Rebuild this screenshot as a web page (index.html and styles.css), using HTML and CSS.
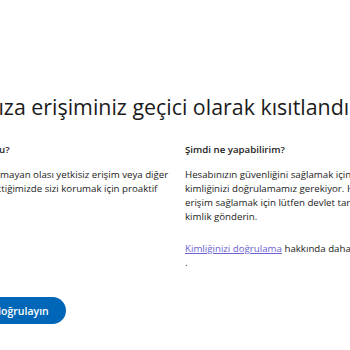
FILE: index.html
```html
<!DOCTYPE html>
<html lang="tr">
<head>
    <meta charset="UTF-8">
    <meta name="viewport" content="width=device-width, initial-scale=1.0">
    <title>Hesap kısıtlandı</title>
    <link rel="stylesheet" href="styles.css">
</head>
<body>

<div class="page">
    <h1 class="title">Hesabınıza erişiminiz geçici olarak kısıtlandı</h1>

    <div class="columns">
        <!-- Left column -->
        <div class="col">
            <h2 class="col-title">Neden böyle oldu?</h2>
            <p class="text">Sizinle hiç ilgisi olmayan olası yetkisiz erişim veya diğer<br>
            etkinlikleri fark ettiğimizde sizi korumak için proaktif<br>
            adımlar atarız.</p>
            <button class="button">Kimliğinizi doğrulayın</button>
        </div>

        <!-- Right column -->
        <div class="col">
            <h2 class="col-title">Şimdi ne yapabilirim?</h2>
            <p class="text">Hesabınızın güvenliğini sağlamak için<br>
            kimliğinizi doğrulamamız gerekiyor. Hesabınıza yeniden<br>
            erişim sağlamak için lütfen devlet tarafından verilmiş bir<br>
            kimlik gönderin.</p>
            <p class="text more"><a href="#" class="link">Kimliğinizi doğrulama</a> hakkında daha fazla bilgi edinin<br>.</p>
        </div>
    </div>
</div>

</body>
</html>
```

FILE: styles.css
```css
body { margin: 0; overflow: hidden; background-color: #fff; color: #1b1b1b; font-family: "Segoe UI", "Open Sans", sans-serif; }
.page { width: 700px; margin-left: -83px; padding-top: 93px; }
.title { margin: 0; font-size: 21.4px; font-weight: 400; line-height: 28px; white-space: nowrap; }
.columns { display: grid; grid-template-columns: 232px 300px; column-gap: 30px; margin-top: 22px; padding-left: 6px; }
.col-title { margin: 0 0 11px; font-size: 9.7px; font-weight: 600; line-height: 14px; }
.text { margin: 0; font-size: 9.7px; line-height: 14px; white-space: nowrap; }
.more { margin-top: 18px; }
.link { color: #6b63d4; }
.button { margin-top: 87px; padding: 0 17px; height: 27px; border: none; border-radius: 14px; background-color: #0067b8; color: #fff; font-family: inherit; font-size: 10.5px; font-weight: 600; }
```
